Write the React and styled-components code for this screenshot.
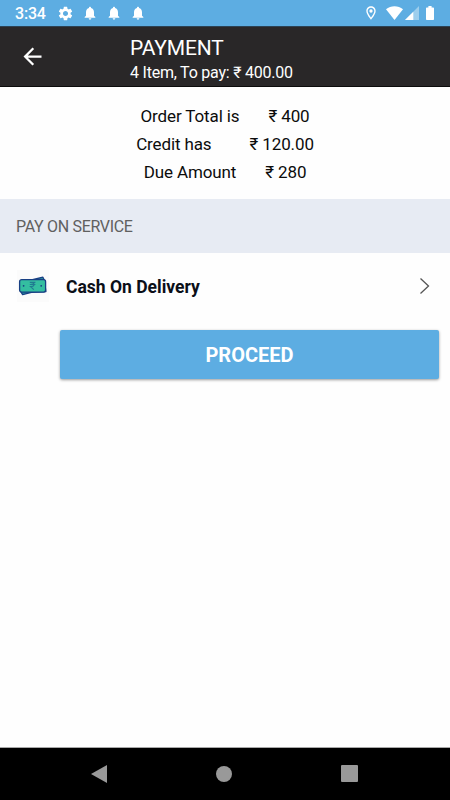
import React from "react";
import styled, { createGlobalStyle } from "styled-components";
import {
  MdArrowBack,
  MdNotifications,
  MdOutlineLocationOn,
  MdSettings,
} from "react-icons/md";

const GlobalStyle = createGlobalStyle`
  * {
    box-sizing: border-box;
  }
  body {
    margin: 0;
    background-color: #fefefe;
    font-family: Roboto, "Noto Sans", sans-serif;
  }
`;

const StScreen = styled.div`
  display: flex;
  flex-direction: column;
  width: 450px;
  height: 800px;
`;

const StStatusBar = styled.div`
  display: flex;
  align-items: center;
  justify-content: space-between;
  height: 26px;
  padding: 0 16px 0 15px;
  background-color: #5dade2;
  color: white;
`;

const StStatusGroup = styled.div`
  display: flex;
  align-items: center;
  gap: ${(props) => props.$gap};

  svg {
    display: block;
  }
`;

const StClock = styled.span`
  width: 34px;
  font-size: 16px;
  font-weight: 500;
  letter-spacing: -0.2px;
  line-height: 26px;
  padding-top: 1px;
`;

const StHeader = styled.header`
  display: flex;
  height: 61px;
  padding-left: 19px;
  background-color: #292728;
  border-top: 1px solid #2b4254;
  border-bottom: 1px solid #0c0c0c;
  color: white;
`;

const StBackBtn = styled.button`
  width: 111px;
  padding: 0;
  border: none;
  background: none;
  color: white;
  text-align: left;

  svg {
    display: block;
  }
`;

const StHeaderText = styled.div`
  padding-top: 8px;
`;

const StTitle = styled.h1`
  margin: 0;
  font-size: 21px;
  font-weight: 400;
  letter-spacing: -0.15px;
  line-height: 26px;
`;

const StSubTitle = styled.p`
  margin: 0;
  font-size: 16px;
  letter-spacing: -0.22px;
  line-height: 24px;
`;

const StSummary = styled.div`
  height: 112px;
  padding-top: 15px;
`;

const StSummaryRow = styled.div`
  display: flex;
  justify-content: center;
  gap: ${(props) => props.$gap};
  color: #0c0c0c;
  font-size: 17px;
  letter-spacing: -0.12px;
  line-height: 28px;
`;

const StSection = styled.div`
  height: 54px;
  padding-left: 16px;
  background-color: #e7ebf3;
  color: #606060;
  font-size: 16px;
  letter-spacing: -0.32px;
  line-height: 55px;
`;

const StMethod = styled.div`
  display: flex;
  align-items: center;
  height: 66px;
  padding: 0 19px 0 17px;
`;

const StMethodName = styled.span`
  flex: 1;
  margin-left: 17px;
  padding-top: 1px;
  color: #0b0f18;
  font-size: 17.5px;
  font-weight: 700;
`;

const StMethodIcon = styled.span`
  display: flex;
  align-items: center;
  justify-content: center;
  width: 32px;
  height: 32px;
  background-color: #fbfbfb;
`;

const StProceedBtn = styled.button`
  height: 49px;
  margin: 11px 11px 0 60px;
  padding: 1px 0 0;
  border: none;
  border-radius: 2px;
  background-color: #5dade2;
  box-shadow: 0 1px 3px rgba(0, 0, 0, 0.4);
  color: white;
  font-family: inherit;
  font-size: 20px;
  font-weight: 700;
`;

const StNavBar = styled.nav`
  display: flex;
  align-items: center;
  justify-content: space-between;
  height: 53px;
  margin-top: auto;
  padding: 0 92px 1px 91px;
  border-top: 1px solid #a8a8a8;
  background-color: black;
`;

function WifiIcon() {
  return (
    <svg width="17" height="14" viewBox="0 0 18 14" preserveAspectRatio="none">
      <path d="M0 3.2C5-.9 13-.9 18 3.2L9 14z" fill="white" />
    </svg>
  );
}

function SignalIcon() {
  return (
    <svg width="14" height="14" viewBox="0 0 14 14">
      <path d="M14 0v14H0z" fill="white" opacity="0.4" />
      <path d="M8.3 5.7V14H0z" fill="white" />
    </svg>
  );
}

function BatteryIcon() {
  return (
    <svg width="8" height="14" viewBox="0 0 8 14">
      <path
        d="M2.4 0h3.2v1.4H7.2a.8.8 0 0 1 .8.8v11a.8.8 0 0 1-.8.8H.8a.8.8 0 0 1-.8-.8v-11a.8.8 0 0 1 .8-.8h1.6z"
        fill="white"
      />
    </svg>
  );
}

// two stacked notes with a rupee sign
function CashIcon() {
  return (
    <svg width="30" height="20" viewBox="0 0 30 20">
      <path
        d="M13.4 4L24.9 1.2l1.4 3 1.6 11.4L13.4 16.3 4.6 18.7 2.4 15z"
        fill="#27969d"
        stroke="#183f83"
        strokeWidth="1.3"
        strokeLinejoin="round"
      />
      <rect
        x="1.6"
        y="3.7"
        width="26"
        height="12.4"
        rx="2"
        fill="#34bea0"
        stroke="#183f83"
        strokeWidth="1.3"
      />
      <path
        d="M11.8 6.4h5.6M11.8 8.5h5.6M12.6 6.4c4.5 0 4.5 4.2 0 4.2l3.2 3"
        fill="none"
        stroke="#217b91"
        strokeWidth="1.2"
      />
      <circle cx="5.6" cy="9.8" r="0.9" fill="#183f83" />
      <circle cx="23.2" cy="9.8" r="0.9" fill="#183f83" />
    </svg>
  );
}

function ChevronIcon() {
  return (
    <svg width="12" height="18" viewBox="0 0 12 18">
      <path
        d="M1.5 1.5L9.5 9l-8 7.5"
        fill="none"
        stroke="#555555"
        strokeWidth="1.3"
      />
    </svg>
  );
}

function SummaryRow({ label, amount, gap = "29px" }) {
  return (
    <StSummaryRow $gap={gap}>
      <span>{label}</span>
      <span>₹ {amount}</span>
    </StSummaryRow>
  );
}

function App() {
  return (
    <>
      <GlobalStyle />
      <StScreen>
        <StStatusBar>
          <StStatusGroup $gap="8px">
            <StClock>3:34</StClock>
            <MdSettings size={17} />
            <MdNotifications size={16} />
            <MdNotifications size={16} />
            <MdNotifications size={16} />
          </StStatusGroup>
          <StStatusGroup $gap="7px">
            <MdOutlineLocationOn size={16} />
            <StStatusGroup $gap="2px">
              <WifiIcon />
              <SignalIcon />
            </StStatusGroup>
            <BatteryIcon />
          </StStatusGroup>
        </StStatusBar>

        <StHeader>
          <StBackBtn aria-label="Back">
            <MdArrowBack size={27} />
          </StBackBtn>
          <StHeaderText>
            <StTitle>PAYMENT</StTitle>
            <StSubTitle>4 Item, To pay: ₹ 400.00</StSubTitle>
          </StHeaderText>
        </StHeader>

        <StSummary>
          <SummaryRow label="Order Total is" amount="400" />
          <SummaryRow label="Credit has" amount="120.00" gap="38px" />
          <SummaryRow label="Due Amount" amount="280" />
        </StSummary>

        <StSection>PAY ON SERVICE</StSection>

        <StMethod>
          <StMethodIcon>
            <CashIcon />
          </StMethodIcon>
          <StMethodName>Cash On Delivery</StMethodName>
          <ChevronIcon />
        </StMethod>

        <StProceedBtn>PROCEED</StProceedBtn>

        <StNavBar>
          <svg width="16" height="18" viewBox="0 0 16 18">
            <path d="M16 0v18L0 9z" fill="#999999" />
          </svg>
          <svg width="16" height="16" viewBox="0 0 16 16">
            <circle cx="8" cy="8" r="8" fill="#999999" />
          </svg>
          <svg width="17" height="17" viewBox="0 0 17 17">
            <rect width="17" height="17" rx="1" fill="#999999" />
          </svg>
        </StNavBar>
      </StScreen>
    </>
  );
}

export default App;
